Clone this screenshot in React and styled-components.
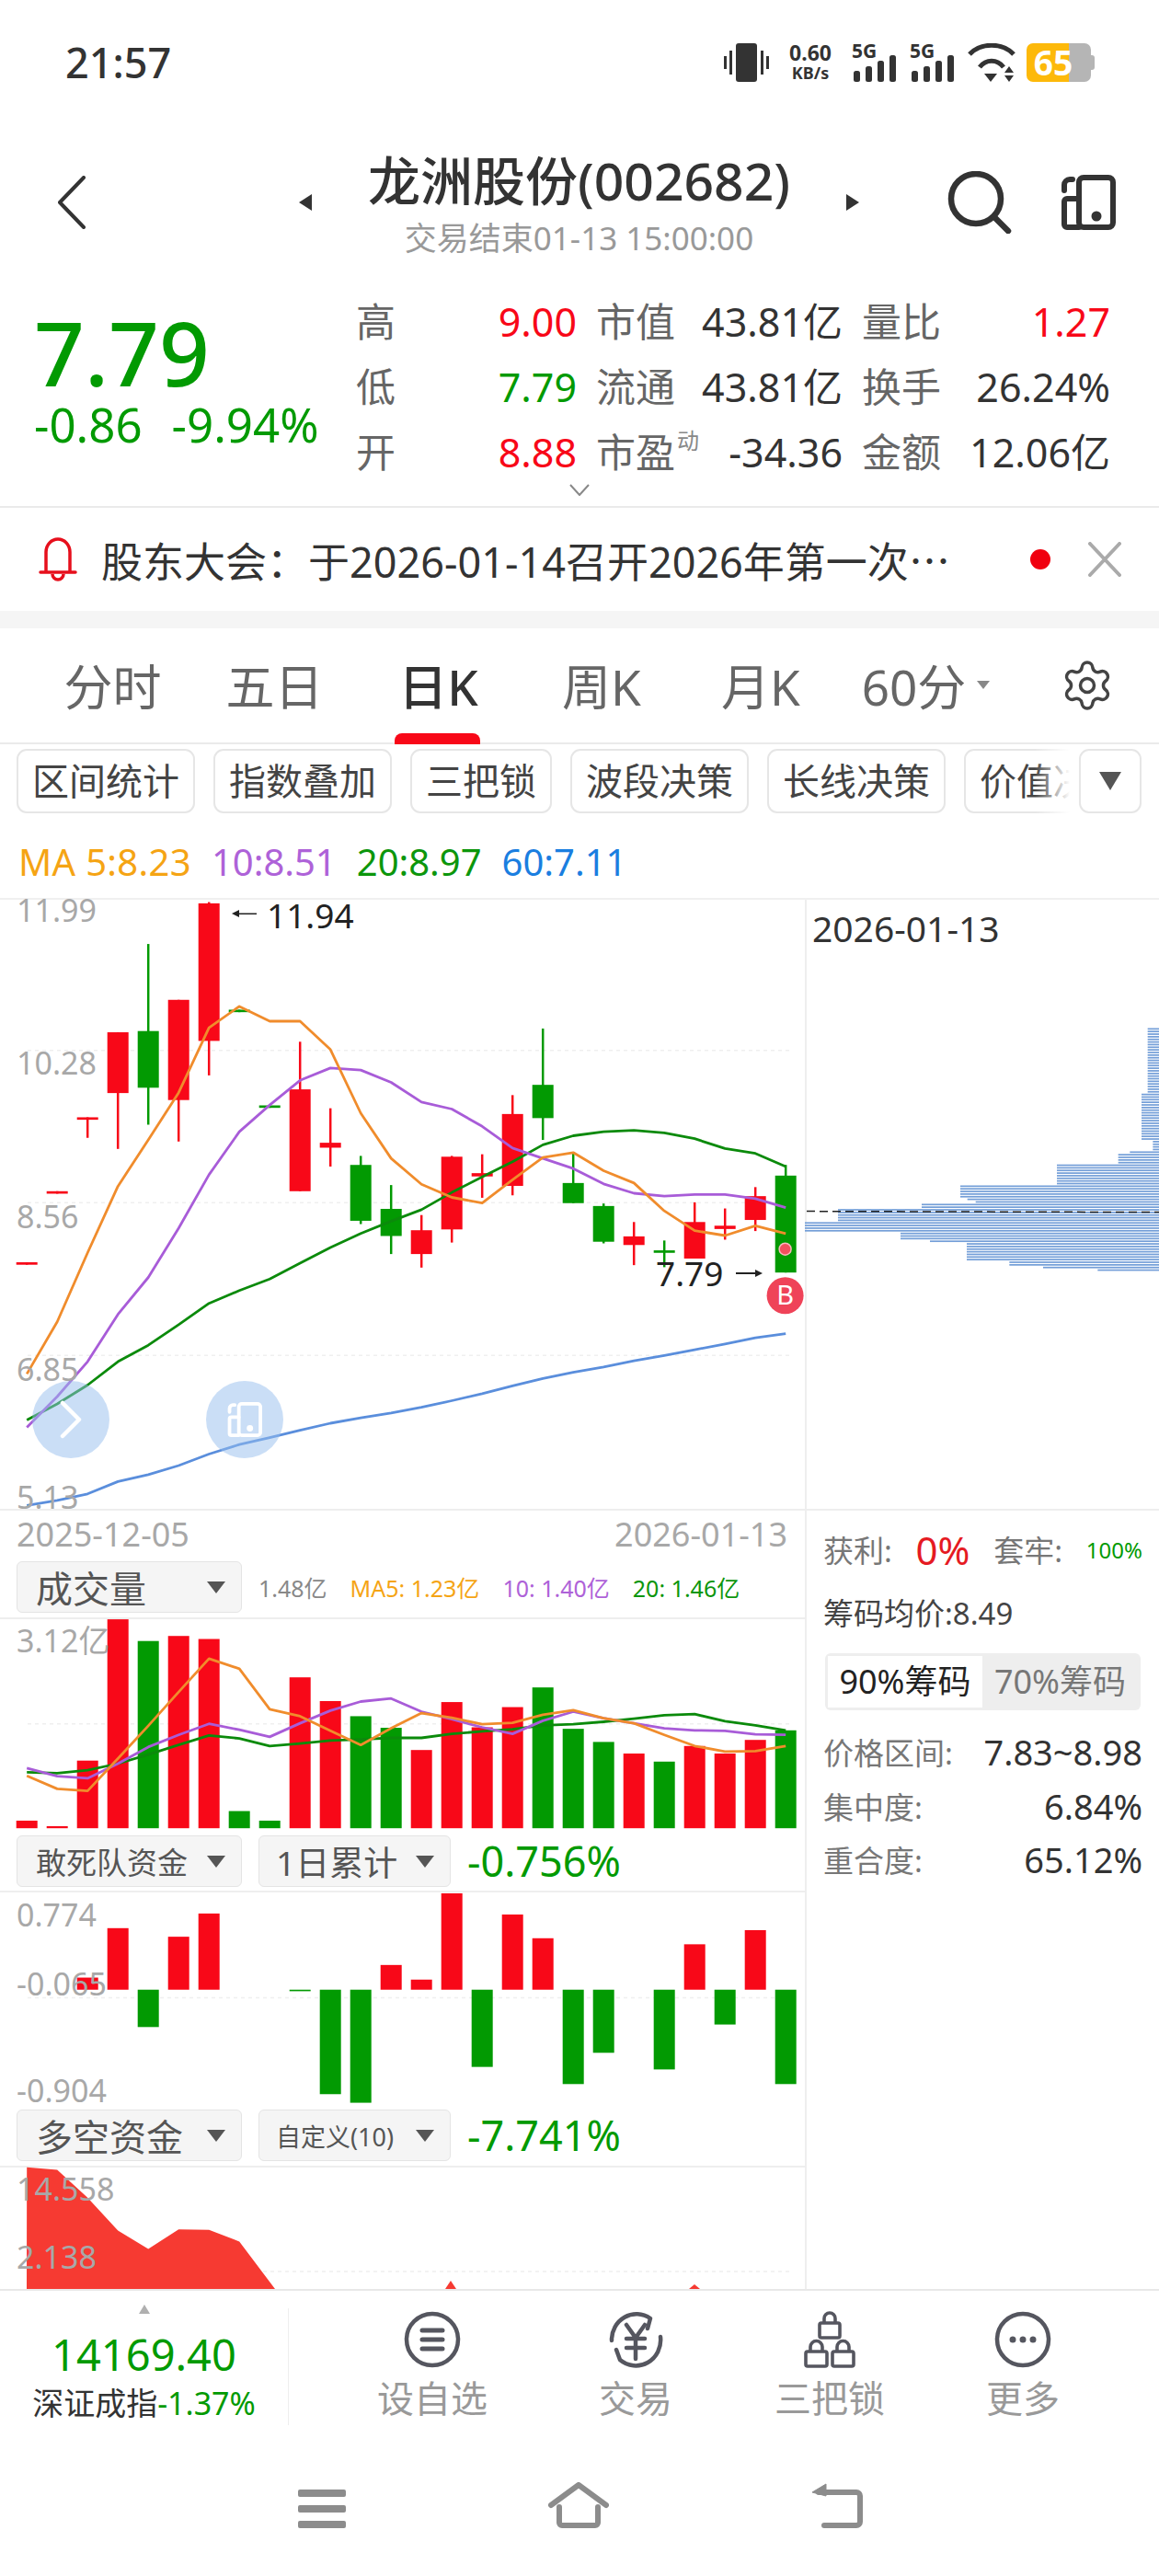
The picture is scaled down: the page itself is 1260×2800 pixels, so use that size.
import React from "react";
import styled, { createGlobalStyle } from "styled-components";
import { Settings } from "lucide-react";

const RED = "#f80818";
const GREEN = "#029a02";
const GRAY = "#a8a8a8";
const ORANGE = "#f08c2c";
const PURPLE = "#a85cd8";
const LINEGREEN = "#0b8a0b";
const BLUE = "#5a8edc";

const GlobalStyle = createGlobalStyle`
  html, body {
    margin: 0;
    padding: 0;
    background: #fff;
  }
  body {
    font-family: "Noto Sans", "Noto Sans CJK SC", sans-serif;
  }
`;

const Page = styled.div`
  width: 1260px;
  height: 2800px;
  overflow: hidden;
  display: flex;
  flex-direction: column;
  background: #fff;
  color: #333;
`;

/* status bar */
const StatusBar = styled.div`
  height: 135px;
  box-sizing: border-box;
  padding: 0 74px 0 71px;
  display: flex;
  align-items: center;
  justify-content: space-between;
`;

const Clock = styled.div`
  font-size: 45px;
  font-weight: 500;
  color: #333;
`;

const StatusIcons = styled.div`
  display: flex;
  align-items: center;
  gap: 14px;
  height: 42px;
`;

const Speed = styled.div`
  display: flex;
  flex-direction: column;
  align-items: center;
  width: 52px;
  margin: 0 5px;
  font-weight: 700;
  color: #333;
  span:first-child {
    font-size: 23px;
    line-height: 23px;
  }
  span:last-child {
    font-size: 18px;
    line-height: 20px;
  }
`;

const SignalSvg = styled.svg`
  overflow: visible;
`;

const SignalText = styled.text`
  font-size: 21px;
  font-weight: 700;
  fill: #333;
`;

const Wifi = styled.svg`
  margin-right: -2px;
`;

const Battery = styled.div`
  position: relative;
  width: 70px;
  height: 42px;
  display: flex;
  align-items: center;
  justify-content: center;
  border-radius: 7px;
  background: linear-gradient(90deg, #fdb90a 0 46px, #b5b5b5 46px 100%);
  font-size: 37px;
  font-weight: 700;
  color: #fff;
  padding-right: 12px;
  box-sizing: border-box;
  &::after {
    content: "";
    position: absolute;
    right: -4px;
    top: 13px;
    width: 4px;
    height: 16px;
    border-radius: 0 3px 3px 0;
    background: #b5b5b5;
  }
`;

/* title */
const Header = styled.div`
  height: 165px;
  display: grid;
  grid-template-columns: 325px 609px 326px;
`;

const BackCell = styled.div`
  padding: 56px 0 0 63px;
`;

const TitleCell = styled.div`
  padding-top: 26px;
  display: flex;
  flex-direction: column;
`;

const TitleRow = styled.div`
  display: flex;
  justify-content: space-between;
  align-items: center;
  height: 70px;
`;

const Title = styled.div`
  font-size: 57px;
  font-weight: 500;
  line-height: 70px;
  color: #333;
  white-space: nowrap;
`;

const SideArrow = styled.i`
  display: block;
  width: 0;
  height: 0;
  margin-top: 48px;
  border-top: 9px solid transparent;
  border-bottom: 9px solid transparent;
  ${(p) =>
    p.$left
      ? "border-right: 14px solid #333;"
      : "border-left: 14px solid #333;"}
`;

const SubTitle = styled.div`
  margin-top: 9px;
  text-align: center;
  font-size: 35px;
  line-height: 38px;
  color: #999;
  white-space: nowrap;
`;

const ToolCell = styled.div`
  padding: 51px 47px 0 96px;
  height: 68px;
  display: flex;
  align-items: center;
  justify-content: space-between;
`;

/* quote */
const Quote = styled.div`
  height: 252px;
  box-sizing: border-box;
  padding: 14px 52px 0 37px;
  border-bottom: 2px solid #eaeaea;
  display: grid;
  grid-template-columns: 350px 1fr;
  position: relative;
`;

const PriceBlock = styled.div`
  padding-top: 19px;
`;

const BigPrice = styled.div`
  height: 100px;
  line-height: 100px;
  font-size: 96px;
  font-weight: 500;
  color: ${GREEN};
`;

const ChangeRow = styled.div`
  display: flex;
  gap: 32px;
  height: 56px;
  line-height: 56px;
  font-size: 51px;
  color: ${GREEN};
`;

const StatGrid = styled.div`
  display: grid;
  grid-template-columns: 240px 268px 270px;
  grid-auto-rows: 71px;
  column-gap: 21px;
`;

const StatCell = styled.div`
  display: flex;
  justify-content: space-between;
  align-items: baseline;
  font-size: 43px;
  line-height: 71px;
`;

const StatLabel = styled.span`
  color: #666;
  sup {
    font-size: 24px;
    color: #888;
    vertical-align: 20px;
    line-height: 0;
    margin-left: 2px;
  }
`;

const StatValue = styled.span`
  color: ${(p) => p.$color || "#333"};
  font-size: ${(p) => (p.$size ? `${p.$size}px` : "inherit")};
  white-space: nowrap;
`;

const MoreArrow = styled.svg`
  position: absolute;
  left: 619px;
  top: 226px;
`;

/* notice */
const Notice = styled.div`
  height: 112px;
  box-sizing: border-box;
  padding: 0 41px 0 42px;
  display: flex;
  align-items: center;
`;

const NoticeText = styled.div`
  flex: 1;
  margin-left: 26px;
  font-size: 45px;
  color: #333;
  white-space: nowrap;
  span {
    font-family: "Noto Sans CJK SC", sans-serif;
  }
`;

const NoticeDot = styled.i`
  width: 22px;
  height: 22px;
  border-radius: 50%;
  background: #f0000f;
  margin-right: 41px;
`;

const Band = styled.div`
  height: 19px;
  background: #f5f5f5;
`;

/* period tabs */
const Tabs = styled.div`
  height: 126px;
  box-sizing: border-box;
  padding-left: 35px;
  border-bottom: 2px solid #eaeaea;
  display: grid;
  grid-template-columns: 175px 177px 179px 176px 170px 163px 1fr;
  align-items: center;
`;

const Tab = styled.div`
  position: relative;
  height: 124px;
  line-height: 128px;
  text-align: center;
  font-size: 53px;
  color: ${(p) => (p.$active ? "#333" : "#666")};
  font-weight: ${(p) => (p.$active ? 500 : 400)};
  white-space: nowrap;
  ${(p) =>
    p.$active &&
    `&::after {
      content: "";
      position: absolute;
      left: 42px;
      width: 93px;
      bottom: -2px;
      height: 12px;
      border-radius: 8px 8px 0 0;
      background: ${RED};
    }`}
`;

const TabCaret = styled.span`
  position: relative;
  &::after {
    content: "";
    position: absolute;
    left: calc(100% + 12px);
    top: 30px;
    border-left: 7px solid transparent;
    border-right: 7px solid transparent;
    border-top: 9px solid #888;
  }
`;

const GearCell = styled.div`
  padding-left: 77px;
  display: flex;
  color: #444;
`;

/* tool chips */
const ChipRow = styled.div`
  height: 75px;
  box-sizing: border-box;
  padding-top: 5px;
  display: flex;
  position: relative;
`;

const ChipScroll = styled.div`
  width: 1165px;
  box-sizing: border-box;
  padding-left: 18px;
  display: flex;
  gap: 20px;
  overflow: hidden;
  position: relative;
  &::after {
    content: "";
    position: absolute;
    right: 0;
    top: 0;
    bottom: 0;
    width: 40px;
    background: linear-gradient(90deg, rgba(255, 255, 255, 0), #fff 95%);
  }
`;

const Chip = styled.div`
  flex: none;
  height: 70px;
  box-sizing: border-box;
  padding: 0 15px;
  line-height: 66px;
  border: 2px solid #e6e6e6;
  border-radius: 11px;
  font-size: 40px;
  color: #444;
  white-space: nowrap;
`;

const ChipDrop = styled.div`
  width: 68px;
  height: 70px;
  margin-left: 8px;
  box-sizing: border-box;
  border: 2px solid #e6e6e6;
  border-radius: 11px;
  display: flex;
  align-items: center;
  justify-content: center;
  &::before {
    content: "";
    border-left: 12px solid transparent;
    border-right: 12px solid transparent;
    border-top: 20px solid #555;
  }
`;

const MaRow = styled.div`
  height: 92px;
  box-sizing: border-box;
  padding: 12px 0 0 20px;
  display: flex;
  align-items: center;
  gap: 22px;
  font-size: 40px;
`;

const MaValue = styled.span`
  color: ${(p) => p.$color};
  letter-spacing: ${(p) => p.$spread || 0}px;
  white-space: nowrap;
`;

/* charts */
const MainRow = styled.div`
  height: 664px;
  border-top: 2px solid #f0f0f0;
  box-sizing: border-box;
  display: grid;
  grid-template-columns: 875px 1fr;
`;

const ChartCell = styled.div`
  position: relative;
  height: 662px;
`;

const PaneSvg = styled.svg`
  display: block;
  overflow: visible;
`;

const AxisText = styled.text`
  font-size: ${(p) => p.$size || 34}px;
  fill: ${(p) => p.$color || GRAY};
`;

const FloatBtn = styled.div`
  position: absolute;
  top: 523px;
  left: ${(p) => p.$x}px;
  width: 84px;
  height: 84px;
  border-radius: 50%;
  background: rgba(150, 190, 238, 0.5);
  color: #fff;
  display: flex;
  align-items: center;
  justify-content: center;
`;

const DistCell = styled.div`
  border-left: 2px solid #eeeeee;
`;

const LowerRow = styled.div`
  height: 848px;
  border-top: 2px solid #eeeeee;
  box-sizing: border-box;
  display: grid;
  grid-template-columns: 875px 1fr;
`;

const LeftColumn = styled.div`
  display: flex;
  flex-direction: column;
`;

const DateRow = styled.div`
  height: 46px;
  box-sizing: border-box;
  padding: 4px 19px 0 18px;
  display: flex;
  justify-content: space-between;
  align-items: center;
  font-size: 36px;
  color: ${GRAY};
`;

const IndicatorBar = styled.div`
  height: ${(p) => p.$h}px;
  box-sizing: border-box;
  padding: ${(p) => p.$top || 7}px 0 0 18px;
  border-bottom: 2px solid #eeeeee;
  display: flex;
  gap: 18px;
`;

const IndicatorChip = styled.div`
  width: ${(p) => p.$w}px;
  height: 56px;
  box-sizing: border-box;
  padding: 0 17px 0 ${(p) => p.$pad || 18}px;
  display: flex;
  justify-content: space-between;
  align-items: center;
  border: 1px solid #e4e4e4;
  border-radius: 6px;
  background: #f5f5f5;
  font-size: ${(p) => p.$size || 40}px;
  color: #555;
  white-space: nowrap;
  &::after {
    content: "";
    border-left: 10px solid transparent;
    border-right: 10px solid transparent;
    border-top: 13px solid #555;
  }
`;

const IndicatorValue = styled.div`
  font-size: 45px;
  line-height: 56px;
  color: ${GREEN};
`;

const VolValues = styled.div`
  display: flex;
  align-items: center;
  gap: 25px;
  height: 56px;
  font-size: 25px;
`;

/* chip stats */
const StatsPanel = styled.div`
  border-left: 2px solid #eeeeee;
  box-sizing: border-box;
  padding: 0 18px 0 18px;
`;

const ProfitRow = styled.div`
  height: 84px;
  display: flex;
  justify-content: space-between;
  align-items: center;
  font-size: 33px;
  color: #777;
`;

const AvgRow = styled.div`
  height: 56px;
  line-height: 56px;
  font-size: 33px;
  color: #444;
`;

const Segment = styled.div`
  margin: 15px 2px 16px;
  height: 62px;
  box-sizing: border-box;
  padding: 3px;
  border-radius: 6px;
  background: #eeeeee;
  display: grid;
  grid-template-columns: 168px 1fr;
`;

const SegmentItem = styled.div`
  text-align: center;
  line-height: 56px;
  font-size: 36px;
  white-space: nowrap;
  color: ${(p) => (p.$active ? "#222" : "#777")};
  background: ${(p) => (p.$active ? "#fff" : "transparent")};
`;

const DetailRow = styled.div`
  height: 58.5px;
  display: flex;
  justify-content: space-between;
  align-items: center;
  font-size: 33px;
  color: #777;
  b {
    font-size: 38px;
    font-weight: 400;
    color: #333;
  }
`;

/* bottom */
const BottomBar = styled.div`
  height: 204px;
  border-top: 2px solid #e8e8e8;
  box-sizing: border-box;
  display: flex;
`;

const IndexBlock = styled.div`
  width: 313px;
  padding-top: 15px;
  display: flex;
  flex-direction: column;
  align-items: center;
  &::before {
    content: "";
    border-left: 6px solid transparent;
    border-right: 6px solid transparent;
    border-bottom: 10px solid #b0b0b0;
  }
`;

const IndexPrice = styled.div`
  margin-top: 14px;
  height: 60px;
  line-height: 60px;
  font-size: 47px;
  color: ${GREEN};
`;

const IndexName = styled.div`
  height: 46px;
  line-height: 46px;
  font-size: 34px;
  color: #333;
  white-space: nowrap;
  span {
    color: ${GREEN};
  }
`;

const VLine = styled.div`
  width: 1px;
  height: 127px;
  margin-top: 19px;
  background: #eeeeee;
`;

const Actions = styled.div`
  margin-left: 45px;
  display: grid;
  grid-template-columns: 222px 220px 202px 218px;
`;

const Action = styled.div`
  padding-top: 22px;
  display: flex;
  flex-direction: column;
  align-items: center;
  gap: 8px;
  color: #55565f;
  span {
    font-size: 40px;
    line-height: 50px;
    color: #999;
  }
`;

const NavBar = styled.div`
  padding: 6px 0 0 324px;
  display: flex;
  align-items: flex-end;
  gap: 220px;
`;

/* data, read off the picture */
const X = (i) => 29.2 + 33 * i;
const Mz = (z) => z * 0.4464 - 18;
const Vz = (z) => z * 0.5485 - 120;
const Fz = (z) => z * 0.5485 - 417;
const Dz = (z) => z * 0.5485 - 716;

const candles = [
  { c: "r", t: 923, b: 929, h: 923, l: 929 },
  { c: "r", t: 750, b: 756, h: 750, l: 756 },
  { c: "r", t: 570, b: 576, h: 570, l: 620 },
  { c: "r", t: 363, b: 511, h: 363, l: 647 },
  { c: "g", t: 360, b: 498, h: 148, l: 588 },
  { c: "r", t: 284, b: 528, h: 284, l: 629 },
  { c: "r", t: 49, b: 384, h: 46, l: 468 },
  { c: "g", t: 308, b: 314, h: 308, l: 314 },
  { c: "g", t: 541, b: 547, h: 541, l: 547 },
  { c: "r", t: 502, b: 750, h: 386, l: 750 },
  { c: "r", t: 632, b: 644, h: 548, l: 690 },
  { c: "g", t: 686, b: 822, h: 664, l: 830 },
  { c: "g", t: 793, b: 859, h: 735, l: 903 },
  { c: "r", t: 845, b: 903, h: 808, l: 936 },
  { c: "r", t: 666, b: 843, h: 664, l: 875 },
  { c: "r", t: 706, b: 714, h: 660, l: 766 },
  { c: "r", t: 562, b: 737, h: 516, l: 760 },
  { c: "g", t: 491, b: 572, h: 354, l: 625 },
  { c: "g", t: 730, b: 779, h: 655, l: 779 },
  { c: "g", t: 786, b: 873, h: 780, l: 877 },
  { c: "r", t: 860, b: 881, h: 825, l: 930 },
  { c: "g", t: 894, b: 900, h: 870, l: 935 },
  { c: "r", t: 825, b: 914, h: 777, l: 914 },
  { c: "r", t: 834, b: 842, h: 792, l: 868 },
  { c: "r", t: 762, b: 820, h: 740, l: 847 },
  { c: "g", t: 712, b: 948, h: 686, l: 948 },
];

const ma5 = [1195, 1068, 900, 738, 625, 510, 352, 300, 336, 336, 405, 560, 670, 733, 765, 779, 722, 668, 656, 700, 730, 798, 846, 858, 834, 853];
const ma10 = [1325, 1250, 1165, 1050, 960, 840, 710, 605, 540, 480, 450, 455, 485, 533, 550, 592, 645, 670, 695, 732, 755, 762, 758, 758, 768, 790];
const ma20 = [1307, 1268, 1222, 1165, 1125, 1075, 1023, 992, 964, 925, 887, 853, 823, 795, 753, 715, 678, 637, 615, 605, 602, 608, 622, 646, 658, 690];
const ma60 = [1515, 1503, 1487, 1457, 1440, 1418, 1390, 1367, 1350, 1332, 1315, 1302, 1290, 1276, 1260, 1243, 1224, 1206, 1191, 1178, 1163, 1150, 1136, 1122, 1107, 1097];

const volume = [
  ["r", 618], ["r", 629], ["r", 499], ["r", 219], ["g", 262], ["r", 252], ["r", 258],
  ["g", 599], ["g", 618], ["r", 334], ["r", 381], ["g", 411], ["g", 434], ["r", 478],
  ["r", 383], ["r", 433], ["r", 393], ["g", 354], ["g", 436], ["g", 462], ["r", 485],
  ["g", 501], ["r", 470], ["r", 485], ["r", 458], ["g", 439],
];
const volMa5 = [529, 555, 559, 495, 430, 363, 297, 317, 397, 411, 440, 468, 435, 405, 414, 427, 424, 408, 399, 415, 425, 448, 470, 481, 480, 470];
const volMa10 = [514, 530, 534, 505, 472, 448, 426, 438, 452, 425, 400, 382, 376, 402, 417, 433, 446, 420, 402, 415, 425, 435, 439, 440, 447, 448];
const volMa20 = [522, 524, 518, 505, 487, 468, 449, 455, 470, 465, 459, 457, 454, 454, 446, 441, 437, 429, 427, 422, 416, 409, 407, 421, 429, 439];

const funds = [null, null, 929, 831, 1027, 848, 802, null, null, 956, 1160, 1177, 904, 933, 762, 1106, 804, 851, 1140, 1078, null, 1111, 863, 1022, 835, 1140];

const distRows = [
  [472, 685, 1163], [685, 835, 1143], [835, 868, 1180], [868, 880, 1105], [880, 910, 1067],
  [910, 982, 867], [982, 1020, 552], [1020, 1030, 575], [1030, 1038, 602], [1038, 1045, 354],
  [1045, 1054, 426], [1054, 1101, 153], [1101, 1133, 45], [1133, 1158, 357], [1158, 1165, 177],
  [1165, 1173, 453], [1173, 1227, 573], [1227, 1243, 712], [1243, 1251, 822], [1251, 1268, 1000],
];

const points = (vals, toY) => vals.map((v, i) => `${X(i).toFixed(1)},${toY(v).toFixed(1)}`).join(" ");

function MaLine({ vals, toY, color }) {
  return <polyline points={points(vals, toY)} fill="none" stroke={color} strokeWidth="2.8" strokeLinejoin="round" />;
}

function GridLine({ y, w = 860 }) {
  return <line x1="30" x2={w} y1={y} y2={y} stroke="#efefef" strokeWidth="1.5" strokeDasharray="4 4" />;
}

function KlineChart() {
  return (
    <PaneSvg width="875" height="662" viewBox="0 0 875 662">
      {[407, 778, 1150].map((z) => (
        <GridLine key={z} y={Mz(z)} />
      ))}
      {candles.map((k, i) => {
        const color = k.c === "r" ? RED : GREEN;
        return (
          <g key={i}>
            <line x1={X(i)} x2={X(i)} y1={Mz(k.h)} y2={Mz(k.l)} stroke={color} strokeWidth="2.5" />
            <rect x={X(i) - 11.5} y={Mz(k.t)} width="23" height={Mz(k.b) - Mz(k.t)} fill={color} />
          </g>
        );
      })}
      <MaLine vals={ma60} toY={Mz} color={BLUE} />
      <MaLine vals={ma20} toY={Mz} color={LINEGREEN} />
      <MaLine vals={ma10} toY={Mz} color={PURPLE} />
      <MaLine vals={ma5} toY={Mz} color={ORANGE} />
      <AxisText x="18" y="24">11.99</AxisText>
      <AxisText x="18" y="190">10.28</AxisText>
      <AxisText x="18" y="357">8.56</AxisText>
      <AxisText x="18" y="523">6.85</AxisText>
      <AxisText x="18" y="662">5.13</AxisText>
      <AxisText x="290" y="31" $size={37} $color="#222">11.94</AxisText>
      <path d="M252 15 L260 11 V14.5 H279 V16 H260 V19 Z" fill="#222" />
      <AxisText x="713" y="420" $size={37} $color="#222">7.79</AxisText>
      <path d="M829 406 L821 402 V405 H800 V407 H821 V410 Z" fill="#222" />
      <circle cx="853.6" cy={Mz(891)} r="6.5" fill="#f2505f" stroke="#f9b7bd" strokeWidth="1.5" />
      <circle cx="853.6" cy={Mz(1004)} r="20" fill="#ef4358" />
      <AxisText x="853.6" y={Mz(1004) + 10} $size={29} $color="#fff" textAnchor="middle">B</AxisText>
    </PaneSvg>
  );
}

function Distribution() {
  const rows = [];
  for (let y = 1117.5; y < 1382; y += 2.85) {
    const z = (y - 960) * 3;
    const row = distRows.find((r) => z >= r[0] && z < r[1]);
    if (row) rows.push({ y: y - 978, x: 860 + row[2] / 3 - 877, pink: z > 1262 });
  }
  return (
    <PaneSvg width="384" height="662" viewBox="0 0 384 662">
      <AxisText x="6" y="46" $size={39} $color="#333">2026-01-13</AxisText>
      {rows.map((r) => (
        <rect key={r.y} x={r.x} y={r.y} width={384 - r.x} height="1.7" fill={r.pink ? "#c65a9c" : "#739ed8"} />
      ))}
      <line x1="0" x2="384" y1="338.6" y2="339.6" stroke="#222" strokeWidth="1.5" strokeDasharray="9 5" />
    </PaneSvg>
  );
}

function VolumeChart() {
  return (
    <PaneSvg width="875" height="228" viewBox="0 0 875 228">
      <GridLine y={Vz(426)} />
      {volume.map(([c, top], i) => (
        <rect key={i} x={X(i) - 11.5} y={Vz(top)} width="23" height={Vz(633) - Vz(top)} fill={c === "r" ? RED : GREEN} />
      ))}
      <MaLine vals={volMa20} toY={Vz} color={LINEGREEN} />
      <MaLine vals={volMa10} toY={Vz} color={PURPLE} />
      <MaLine vals={volMa5} toY={Vz} color={ORANGE} />
      <AxisText x="18" y="36">3.12亿</AxisText>
    </PaneSvg>
  );
}

function FundsChart() {
  const zero = 953;
  return (
    <PaneSvg width="875" height="228" viewBox="0 0 875 228">
      <GridLine y={Fz(969)} />
      {funds.map((z, i) =>
        z === null ? null : (
          <rect
            key={i}
            x={X(i) - 11.5}
            y={Fz(Math.min(z, zero))}
            width="23"
            height={Math.abs(Fz(z) - Fz(zero))}
            fill={z < zero ? RED : GREEN}
          />
        )
      )}
      <AxisText x="18" y="37">0.774</AxisText>
      <AxisText x="18" y="112">-0.065</AxisText>
      <AxisText x="18" y="228">-0.904</AxisText>
    </PaneSvg>
  );
}

function AreaChart() {
  const top = [1305, 1310, 1365, 1430, 1467, 1428, 1429, 1452];
  const path = top.map((z, i) => `${X(i).toFixed(1)},${Dz(z).toFixed(1)}`).join(" ");
  return (
    <PaneSvg width="875" height="132" viewBox="0 0 875 132">
      <GridLine y="113" />
      <polygon points={`29,132 ${path} 299,132`} fill="#f63a32" />
      <polygon points="484,132 490,123 496,132" fill="#f63a32" />
      <polygon points="749,132 755,127 761,132" fill="#f63a32" />
      <AxisText x="18" y="36">14.558</AxisText>
      <AxisText x="18" y="110">2.138</AxisText>
    </PaneSvg>
  );
}

/* icons */
function PhoneIcon({ w = 60, h = 62, sw = 6 }) {
  return (
    <svg width={w} height={h} viewBox="0 0 60 62" fill="none" stroke="currentColor" strokeWidth={sw} strokeLinecap="round" strokeLinejoin="round">
      <rect x="20" y="4" width="37" height="54" rx="5" />
      <path d="M20 58 H7 a3 3 0 0 1-3-3 V30 a3 3 0 0 1 3-3 H20" />
      <path d="M4 18 V12 a6 6 0 0 1 6-6 H13" />
      <circle cx="39" cy="46" r="2.5" fill="currentColor" />
    </svg>
  );
}

function Signal() {
  return (
    <SignalSvg width="49" height="42" viewBox="0 0 49 42">
      <SignalText x="0" y="16">5G</SignalText>
      <rect x="2" y="30" width="7" height="12" rx="2.5" fill="#333" />
      <rect x="15" y="25" width="7" height="17" rx="2.5" fill="#333" />
      <rect x="28" y="19" width="7" height="23" rx="2.5" fill="#333" />
      <rect x="41" y="13" width="7" height="29" rx="2.5" fill="#333" />
    </SignalSvg>
  );
}

function Bell() {
  return (
    <svg width="42" height="50" viewBox="0 0 42 50" fill="none" stroke="#e60f1c" strokeWidth="3.5" strokeLinejoin="round">
      <path d="M8 38 V17 a13 14 0 0 1 26 0 V38" />
      <path d="M2 39 H40" strokeLinecap="round" />
      <path d="M15 41 a6 6 0 0 0 12 0" />
    </svg>
  );
}

export default function App() {
  return (
    <Page>
      <GlobalStyle />
      <StatusBar>
        <Clock>21:57</Clock>
        <StatusIcons>
          <svg width="49" height="42" viewBox="0 0 49 42" fill="#333">
            <rect x="13" y="0" width="23" height="42" rx="3" />
            <rect x="0" y="14" width="3" height="14" />
            <rect x="6" y="8" width="3" height="26" />
            <rect x="40" y="8" width="3" height="26" />
            <rect x="46" y="14" width="3" height="14" />
          </svg>
          <Speed>
            <span>0.60</span>
            <span>KB/s</span>
          </Speed>
          <Signal />
          <Signal />
          <Wifi width="52" height="42" viewBox="0 0 52 42" fill="none" stroke="#333" strokeWidth="5">
            <path d="M2 12 C14 -1 38 -1 50 12" />
            <path d="M13 26 C20 17 32 17 39 26" />
            <path d="M18 33 H32 L25 42 Z" fill="#333" stroke="none" />
            <path d="M45 25 L50 32 H40 Z M40 35 H50 L45 42 Z" fill="#333" stroke="none" />
          </Wifi>
          <Battery>65</Battery>
        </StatusIcons>
      </StatusBar>

      <Header>
        <BackCell>
          <svg width="30" height="58" viewBox="0 0 30 58" fill="none" stroke="#333" strokeWidth="4" strokeLinecap="round" strokeLinejoin="round">
            <path d="M28 2 L2 29 L28 56" />
          </svg>
        </BackCell>
        <TitleCell>
          <TitleRow>
            <SideArrow $left />
            <Title>龙洲股份(002682)</Title>
            <SideArrow />
          </TitleRow>
          <SubTitle>交易结束01-13 15:00:00</SubTitle>
        </TitleCell>
        <ToolCell>
          <svg width="70" height="68" viewBox="0 0 70 68" fill="none" stroke="#333" strokeWidth="6.5" strokeLinecap="round">
            <ellipse cx="31" cy="30" rx="27" ry="27" />
            <path d="M51 50 L66 65" />
          </svg>
          <PhoneIcon />
        </ToolCell>
      </Header>

      <Quote>
        <PriceBlock>
          <BigPrice>7.79</BigPrice>
          <ChangeRow>
            <span>-0.86</span>
            <span>-9.94%</span>
          </ChangeRow>
        </PriceBlock>
        <StatGrid>
          <StatCell><StatLabel>高</StatLabel><StatValue $color={RED}>9.00</StatValue></StatCell>
          <StatCell><StatLabel>市值</StatLabel><StatValue>43.81亿</StatValue></StatCell>
          <StatCell><StatLabel>量比</StatLabel><StatValue $color={RED}>1.27</StatValue></StatCell>
          <StatCell><StatLabel>低</StatLabel><StatValue $color={GREEN}>7.79</StatValue></StatCell>
          <StatCell><StatLabel>流通</StatLabel><StatValue>43.81亿</StatValue></StatCell>
          <StatCell><StatLabel>换手</StatLabel><StatValue>26.24%</StatValue></StatCell>
          <StatCell><StatLabel>开</StatLabel><StatValue $color={RED}>8.88</StatValue></StatCell>
          <StatCell><StatLabel>市盈<sup>动</sup></StatLabel><StatValue>-34.36</StatValue></StatCell>
          <StatCell><StatLabel>金额</StatLabel><StatValue>12.06亿</StatValue></StatCell>
        </StatGrid>
        <MoreArrow width="22" height="13" viewBox="0 0 22 13" fill="none" stroke="#888" strokeWidth="2">
          <path d="M1 1 L11 12 L21 1" />
        </MoreArrow>
      </Quote>

      <Notice>
        <Bell />
        <NoticeText>股东大会：于2026-01-14召开2026年第一次<span>…</span></NoticeText>
        <NoticeDot />
        <svg width="36" height="38" viewBox="0 0 36 38" stroke="#aaa" strokeWidth="4" strokeLinecap="round">
          <path d="M2 2 L34 36 M34 2 L2 36" />
        </svg>
      </Notice>
      <Band />

      <Tabs>
        <Tab>分时</Tab>
        <Tab>五日</Tab>
        <Tab $active>日K</Tab>
        <Tab>周K</Tab>
        <Tab>月K</Tab>
        <Tab><TabCaret>60分</TabCaret></Tab>
        <GearCell><Settings size={60} strokeWidth={1.4} /></GearCell>
      </Tabs>

      <ChipRow>
        <ChipScroll>
          <Chip>区间统计</Chip>
          <Chip>指数叠加</Chip>
          <Chip>三把锁</Chip>
          <Chip>波段决策</Chip>
          <Chip>长线决策</Chip>
          <Chip>价值决策</Chip>
        </ChipScroll>
        <ChipDrop />
      </ChipRow>

      <MaRow>
        <MaValue $color="#f5a414" $spread={0.3}>MA 5:8.23</MaValue>
        <MaValue $color="#ae62d8">10:8.51</MaValue>
        <MaValue $color="#0c960c">20:8.97</MaValue>
        <MaValue $color="#1a7ee0">60:7.11</MaValue>
      </MaRow>

      <MainRow>
        <ChartCell>
          <KlineChart />
          <FloatBtn $x={35}>
            <svg width="28" height="44" viewBox="0 0 28 44" fill="none" stroke="#fff" strokeWidth="4.5" strokeLinecap="round" strokeLinejoin="round">
              <path d="M5 4 L23 22 L5 40" />
            </svg>
          </FloatBtn>
          <FloatBtn $x={224}>
            <PhoneIcon w={38} h={40} sw={6} />
          </FloatBtn>
        </ChartCell>
        <DistCell>
          <Distribution />
        </DistCell>
      </MainRow>

      <LowerRow>
        <LeftColumn>
          <DateRow>
            <span>2025-12-05</span>
            <span>2026-01-13</span>
          </DateRow>
          <IndicatorBar $h={72} $top={9}>
            <IndicatorChip $w={245} $pad={20}>成交量</IndicatorChip>
            <VolValues>
              <MaValue $color="#888">1.48亿</MaValue>
              <MaValue $color="#f5a414">MA5: 1.23亿</MaValue>
              <MaValue $color="#ae62d8">10: 1.40亿</MaValue>
              <MaValue $color="#0c960c">20: 1.46亿</MaValue>
            </VolValues>
          </IndicatorBar>
          <VolumeChart />
          <IndicatorBar $h={69}>
            <IndicatorChip $w={245} $pad={20} $size={33}>敢死队资金</IndicatorChip>
            <IndicatorChip $w={209} $size={37}>1日累计</IndicatorChip>
            <IndicatorValue>-0.756%</IndicatorValue>
          </IndicatorBar>
          <FundsChart />
          <IndicatorBar $h={71} $top={8}>
            <IndicatorChip $w={245} $pad={20}>多空资金</IndicatorChip>
            <IndicatorChip $w={209} $size={27}>自定义(10)</IndicatorChip>
            <IndicatorValue>-7.741%</IndicatorValue>
          </IndicatorBar>
          <AreaChart />
        </LeftColumn>
        <StatsPanel>
          <ProfitRow>
            <span>获利:</span>
            <StatValue $color="#e51a22" $size={42}>0%</StatValue>
            <span>套牢:</span>
            <StatValue $color={GREEN} $size={24}>100%</StatValue>
          </ProfitRow>
          <AvgRow>筹码均价:8.49</AvgRow>
          <Segment>
            <SegmentItem $active>90%筹码</SegmentItem>
            <SegmentItem>70%筹码</SegmentItem>
          </Segment>
          <DetailRow><span>价格区间:</span><b>7.83~8.98</b></DetailRow>
          <DetailRow><span>集中度:</span><b>6.84%</b></DetailRow>
          <DetailRow><span>重合度:</span><b>65.12%</b></DetailRow>
        </StatsPanel>
      </LowerRow>

      <BottomBar>
        <IndexBlock>
          <IndexPrice>14169.40</IndexPrice>
          <IndexName>深证成指<span>-1.37%</span></IndexName>
        </IndexBlock>
        <VLine />
        <Actions>
          <Action>
            <svg width="62" height="62" viewBox="0 0 62 62" fill="none" stroke="currentColor" strokeWidth="4.5" strokeLinecap="round">
              <circle cx="31" cy="31" r="28" />
              <path d="M20 21 H42 M20 31 H42 M20 41 H42" strokeWidth="5" />
            </svg>
            <span>设自选</span>
          </Action>
          <Action>
            <svg width="62" height="62" viewBox="0 0 62 62" fill="none" stroke="currentColor" strokeWidth="4.5" strokeLinecap="round" strokeLinejoin="round">
              <path d="M5 32 A27 28 0 0 1 47 8 L44 19" />
              <path d="M58 28 A27 28 0 0 1 14 53 L10 42" />
              <path d="M21 15 L31 29 L41 15 M21 30 H41 M21 40 H41 M31 29 V52" />
            </svg>
            <span>交易</span>
          </Action>
          <Action>
            <svg width="62" height="62" viewBox="0 0 62 62" fill="none" stroke="currentColor" strokeWidth="3.6" strokeLinejoin="round">
              <rect x="20" y="13" width="22" height="16" rx="2" />
              <path d="M25 13 V8 a6 6 0 0 1 12 0 V13" />
              <rect x="5" y="44" width="23" height="16" rx="2" />
              <path d="M10 44 V39 a6.5 6.5 0 0 1 13 0 V44" />
              <rect x="34" y="44" width="23" height="16" rx="2" />
              <path d="M39 44 V39 a6.5 6.5 0 0 1 13 0 V44" />
            </svg>
            <span>三把锁</span>
          </Action>
          <Action>
            <svg width="62" height="62" viewBox="0 0 62 62" fill="none" stroke="currentColor" strokeWidth="4.5">
              <circle cx="31" cy="31" r="28" />
              <circle cx="20" cy="31" r="3.5" fill="currentColor" stroke="none" />
              <circle cx="31" cy="31" r="3.5" fill="currentColor" stroke="none" />
              <circle cx="42" cy="31" r="3.5" fill="currentColor" stroke="none" />
            </svg>
            <span>更多</span>
          </Action>
        </Actions>
      </BottomBar>

      <NavBar>
        <svg width="52" height="42" viewBox="0 0 52 42" fill="#8c8c8c">
          <rect x="0" y="0" width="52" height="8" rx="2" />
          <rect x="0" y="17" width="52" height="8" rx="2" />
          <rect x="0" y="34" width="52" height="8" rx="2" />
        </svg>
        <svg width="66" height="50" viewBox="0 0 66 50" fill="none" stroke="#8c8c8c" strokeWidth="6" strokeLinecap="round" strokeLinejoin="round">
          <path d="M3 25 L33 3 L63 25" />
          <path d="M12 27 V44 a3 3 0 0 0 3 3 H51 a3 3 0 0 0 3-3 V27" />
        </svg>
        <svg width="56" height="50" viewBox="0 0 56 50" fill="none" stroke="#8c8c8c" strokeWidth="6" strokeLinejoin="round">
          <path d="M8 11 H49 a4 4 0 0 1 4 4 V43 a4 4 0 0 1-4 4 H14" strokeLinecap="round" />
          <path d="M16 2 L1 11 L16 15 Z" fill="#8c8c8c" strokeWidth="1" />
        </svg>
      </NavBar>
    </Page>
  );
}
